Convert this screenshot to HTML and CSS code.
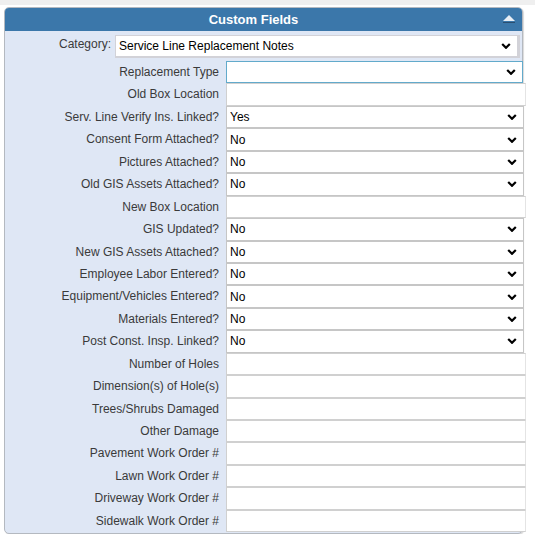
FILE: index.html
```html
<!DOCTYPE html>
<html lang="en">
<head>
    <meta charset="UTF-8">
    <meta name="viewport" content="width=device-width, initial-scale=1.0">
    <title>Custom Fields</title>
    <link rel="stylesheet" href="styles.css">
</head>
<body>
    <div class="topbar"></div>
    <div class="panel">
        <div class="panelHeader">
            <span>Custom Fields</span>
            <svg class="collapse" width="14" height="10" viewBox="0 0 14 10">
                <polygon points="1,7 7,1 13,7" fill="#e8eef5"/>
                <line x1="1" y1="8.5" x2="13" y2="8.5" stroke="#2a4e70" stroke-width="1"/>
            </svg>
        </div>
        <div class="categoryRow">
            <label>Category:</label>
            <select class="catSelect"><option>Service Line Replacement Notes</option></select>
        </div>
        <!-- Field rows -->
        <div class="fields">
            <label>Replacement Type</label><select class="focused"><option></option></select>
            <label>Old Box Location</label><input type="text">
            <label>Serv. Line Verify Ins. Linked?</label><select><option>Yes</option></select>
            <label>Consent Form Attached?</label><select><option>No</option></select>
            <label>Pictures Attached?</label><select><option>No</option></select>
            <label>Old GIS Assets Attached?</label><select><option>No</option></select>
            <label>New Box Location</label><input type="text">
            <label>GIS Updated?</label><select><option>No</option></select>
            <label>New GIS Assets Attached?</label><select><option>No</option></select>
            <label>Employee Labor Entered?</label><select><option>No</option></select>
            <label>Equipment/Vehicles Entered?</label><select><option>No</option></select>
            <label>Materials Entered?</label><select><option>No</option></select>
            <label>Post Const. Insp. Linked?</label><select><option>No</option></select>
            <label>Number of Holes</label><input type="text">
            <label>Dimension(s) of Hole(s)</label><input type="text">
            <label>Trees/Shrubs Damaged</label><input type="text">
            <label>Other Damage</label><input type="text">
            <label>Pavement Work Order #</label><input type="text">
            <label>Lawn Work Order #</label><input type="text">
            <label>Driveway Work Order #</label><input type="text">
            <label>Sidewalk Work Order #</label><input type="text">
        </div>
    </div>
</body>
</html>
```

FILE: styles.css
```css
/* Basic reset */
*, *:before, *:after {
    box-sizing: border-box;
}
body {
    margin: 0;
    background-color: #fff;
    font-family: Arial, "Liberation Sans", sans-serif;
    font-size: 12px;
    color: #3a3a3a;
}
.topbar {
    height: 5px;
    background-color: #efefef;
}
.panel {
    width: 519px;
    margin: 2px 0 0 4px;
    background-color: #dfe7f5;
    border: 1px solid #b4b9c0;
    border-radius: 5px;
    box-shadow: 1px 1px 1px rgba(0,0,0,0.15);
    padding-bottom: 1px;
}
.panelHeader {
    height: 23px;
    background-color: #3b77aa;
    border-radius: 4px 4px 0 0;
    color: #fff;
    font-weight: bold;
    font-size: 13px;
    display: flex;
    align-items: center;
    justify-content: center;
    padding-right: 20px;
    position: relative;
}
.collapse {
    position: absolute;
    right: 6px;
    top: 6px;
}
.categoryRow {
    display: flex;
    align-items: center;
    height: 28px;
    padding-top: 2px;
}
.categoryRow label {
    width: 108px;
    text-align: right;
    padding-right: 2px;
    padding-bottom: 4px;
}
select, input {
    font-family: Arial, "Liberation Sans", sans-serif;
    font-size: 12px;
    color: #000;
    background-color: #fff;
    border: 1px solid #c6c6c6;
    border-radius: 0;
    margin: 0;
    outline: none;
}
select {
    appearance: none;
    -webkit-appearance: none;
    padding: 0 20px 0 3px;
    background-image: url("data:image/svg+xml,%3Csvg xmlns='http://www.w3.org/2000/svg' width='10' height='6' viewBox='0 0 10 6'%3E%3Cpath d='M1.2 1l3.8 3.8 3.8-3.8' fill='none' stroke='%23000' stroke-width='2.2'/%3E%3C/svg%3E");
    background-repeat: no-repeat;
    background-position: right 6px center;
}
.catSelect {
    width: 405px;
    height: 23px;
    margin-left: 2px;
    border-color: #d2d2d8;
    border-width: 1px 3px 2px 1px;
}
.fields {
    display: grid;
    grid-template-columns: 221px 298px;
    grid-auto-rows: 22.45px;
    margin-top: 2px;
}
.fields label {
    text-align: right;
    padding-right: 7px;
    line-height: 22px;
    white-space: nowrap;
}
.fields select, .fields input {
    width: 298px;
    height: 22.45px;
}
.fields input {
    border-color: #d0d0d0;
    border-right-color: #e4e4e4;
    width: 300px;
}
.fields select.focused {
    border-color: #62aacb;
    width: 297px;
}
```
